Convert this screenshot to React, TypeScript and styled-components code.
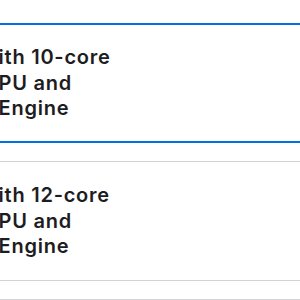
import React from "react";
import styled, { createGlobalStyle } from "styled-components";

const Global = createGlobalStyle`
  html, body { margin: 0; padding: 0; background: #ffffff; }
  body { font-family: Inter, "Noto Sans", "Liberation Sans", sans-serif; color: #1d1d1f; overflow: hidden; }
`;

const Viewport = styled.div`
  width: 300px;
  height: 300px;
  overflow: hidden;
`;

const List = styled.div`
  display: flex;
  flex-direction: column;
  gap: 18px;
  padding-top: 23px;
  margin-left: -40px;
  width: 400px;
`;

const Card = styled.div<{ $selected?: boolean }>`
  box-sizing: border-box;
  height: 120px;
  flex: none;
  border-radius: 12px;
  border: 1px solid ${(p) => (p.$selected ? "#0071e3" : "#d2d2d7")};
  box-shadow: ${(p) => (p.$selected ? "inset 0 0 0 1px #0071e3" : "none")};
  padding: 21px 0 0 37.6px;
`;

const Title = styled.div`
  font-size: 20px;
  line-height: 25.6px;
  font-weight: 600;
  letter-spacing: 0.75px;
  white-space: nowrap;
`;

const cards = [
  { selected: true, lines: ["ith 10-core", "PU and", "Engine"] },
  { selected: false, lines: ["ith 12-core", "PU and", "Engine"] },
  { selected: false, lines: [] as string[] },
];

export default function App() {
  return (
    <Viewport>
      <Global />
      <List>
        {cards.map((c, i) => (
          <Card key={i} $selected={c.selected}>
            <Title>
              {c.lines.map((l, j) => (
                <div key={j}>{l}</div>
              ))}
            </Title>
          </Card>
        ))}
      </List>
    </Viewport>
  );
}
